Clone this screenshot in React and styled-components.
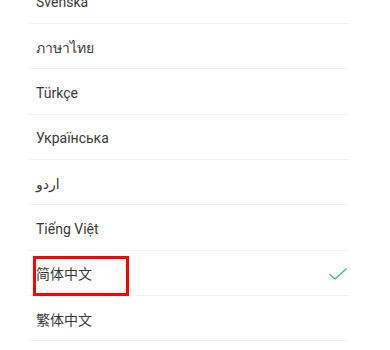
import React from 'react';
import styled, { createGlobalStyle } from 'styled-components';

const GlobalStyle = createGlobalStyle`
  html, body {
    margin: 0;
    padding: 0;
    background: #ffffff;
  }
  body {
    font-family: Roboto, "Noto Sans", "Noto Sans CJK SC", "DejaVu Sans", sans-serif;
    overflow: hidden;
  }
`;

const Page = styled.div`
  width: 390px;
  height: 350px;
  overflow: hidden;
  background: #ffffff;
`;

const List = styled.ul`
  list-style: none;
  margin: -21.3px 0 0;
  padding: 0 41px 0 29px;
`;

const Row = styled.li`
  position: relative;
  display: flex;
  align-items: center;
  justify-content: space-between;
  height: 45.33px;
  box-sizing: border-box;
  padding: 0 2px 0 7px;
  border-bottom: 1px solid #f3f3f3;
  color: #3a3a3a;
  font-size: 14px;
`;

const Label = styled.span`
  line-height: 1;
  margin-top: 3px;
`;

const Highlight = styled.span`
  position: absolute;
  left: 4px;
  top: 5px;
  width: 96px;
  height: 40px;
  border: 3px solid #ff0000;
  box-sizing: border-box;
  pointer-events: none;
`;

const Check = () => (
  <svg width="18" height="12" viewBox="0 0 18 12" fill="none" style={{ marginTop: 2 }}>
    <path d="M1 6.5 L6 11 L17 1" stroke="#45bfaa" strokeWidth="1.6" strokeLinecap="round" strokeLinejoin="round" />
  </svg>
);

const languages = [
  { name: 'Svenska' },
  { name: 'ภาษาไทย' },
  { name: 'Türkçe' },
  { name: 'Українська' },
  { name: 'اردو' },
  { name: 'Tiếng Việt' },
  { name: '简体中文', selected: true },
  { name: '繁体中文' },
];

const App = () => (
  <Page>
    <GlobalStyle />
    <List>
      {languages.map(lang => (
        <Row key={lang.name}>
          <Label>{lang.name}</Label>
          {lang.selected && <Highlight />}
          {lang.selected && <Check />}
        </Row>
      ))}
    </List>
  </Page>
);

export default App;
